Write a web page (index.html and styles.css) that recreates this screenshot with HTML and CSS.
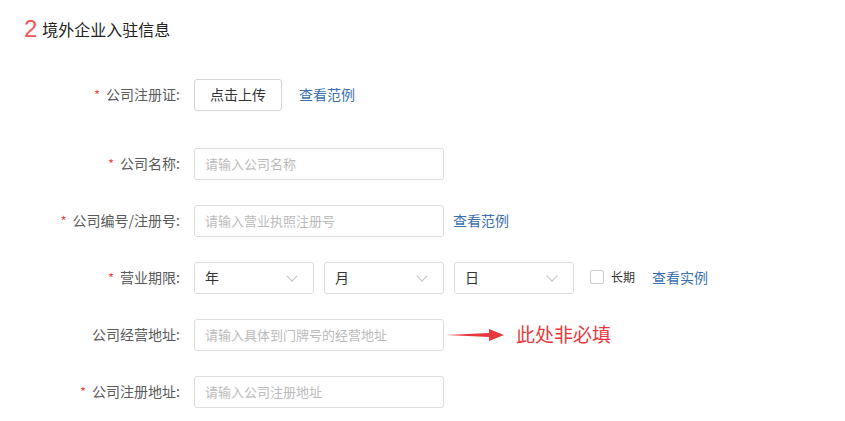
FILE: index.html
```html
<!DOCTYPE html>
<html lang="zh-CN">
<head>
    <meta charset="UTF-8">
    <title>境外企业入驻信息</title>
    <link rel="stylesheet" href="styles.css">
</head>
<body>

<div class="section">
    <h3 class="section-title"><span class="step">2</span>境外企业入驻信息</h3>

    <div class="form">
        <div class="form-row first">
            <label class="label required">公司注册证:</label>
            <button class="upload-btn">点击上传</button>
            <a class="link link-wide">查看范例</a>
        </div>

        <div class="form-row">
            <label class="label required">公司名称:</label>
            <input class="text-input" type="text" placeholder="请输入公司名称">
        </div>

        <div class="form-row">
            <label class="label required">公司编号/注册号:</label>
            <input class="text-input" type="text" placeholder="请输入营业执照注册号">
            <a class="link">查看范例</a>
        </div>

        <div class="form-row">
            <label class="label required">营业期限:</label>
            <div class="select">年<span class="chevron"></span></div>
            <div class="select">月<span class="chevron"></span></div>
            <div class="select">日<span class="chevron"></span></div>
            <span class="checkbox"></span>
            <span class="check-text">长期</span>
            <a class="link link-wide">查看实例</a>
        </div>

        <div class="form-row">
            <label class="label">公司经营地址:</label>
            <input class="text-input" type="text" placeholder="请输入具体到门牌号的经营地址">
            <svg class="arrow" width="58" height="12" viewBox="0 0 58 12">
                <polygon points="0,6 43,4 43,0 58,6 43,12 43,8" fill="#e8383d"/>
            </svg>
            <span class="note">此处非必填</span>
        </div>

        <div class="form-row">
            <label class="label required">公司注册地址:</label>
            <input class="text-input" type="text" placeholder="请输入公司注册地址">
        </div>
    </div>
</div>

</body>
</html>
```

FILE: styles.css
```css
body {
    margin: 0;
    background-color: #ffffff;
    font-family: "Microsoft YaHei", "Noto Sans CJK SC", "Noto Sans", sans-serif;
    color: #333333;
}

.section {
    padding: 17px 0 0 24px;
}
.section-title {
    margin: 0 0 38px 0;
    font-size: 16px;
    font-weight: normal;
    line-height: 24px;
    display: flex;
    align-items: center;
    color: #222222;
}
.section-title .step {
    font-size: 24px;
    color: #f0555a; /* step number red */
    margin-right: 5px;
    font-family: "Liberation Sans", "Noto Sans", sans-serif;
}

/* form rows */
.form {
    margin-left: -24px;
}
.form-row {
    display: flex;
    align-items: center;
    height: 32px;
    margin-bottom: 25px;
}
.form-row.first {
    margin-bottom: 37px;
}
.label {
    width: 180px;
    flex-shrink: 0;
    text-align: right;
    font-size: 14px;
    color: #5a5a5a;
    margin-right: 14px;
    padding-bottom: 3px;
}
.label.required::before {
    content: "*";
    color: #e94b4b;
    font-size: 13px;
    margin-right: 6px;
}

.upload-btn {
    width: 88px;
    height: 32px;
    background-color: #ffffff;
    border: 1px solid #d4d4d4;
    border-radius: 3px;
    font-family: inherit;
    font-size: 14px;
    color: #333333;
    padding: 0 0 2px 0;
}

.text-input {
    width: 250px;
    height: 32px;
    box-sizing: border-box;
    border: 1px solid #dddddd;
    border-radius: 3px;
    padding: 0 10px 2px 10px;
    font-family: inherit;
    font-size: 13px;
    color: #333333;
    outline: none;
}
.text-input::placeholder {
    color: #bbbbbb;
}

.link {
    font-size: 14px;
    color: #3a6fb0;
    margin-left: 9px;
    padding-bottom: 3px;
    cursor: pointer;
}
.link.link-wide {
    margin-left: 17px;
}

.select {
    position: relative;
    width: 120px;
    height: 32px;
    box-sizing: border-box;
    border: 1px solid #dddddd;
    border-radius: 3px;
    padding-left: 10px;
    font-size: 14px;
    line-height: 28px;
    color: #333333;
    margin-right: 10px;
}
.select .chevron {
    position: absolute;
    right: 17px;
    top: 9px;
    width: 7px;
    height: 7px;
    border-right: 1px solid #c4c4c4;
    border-bottom: 1px solid #c4c4c4;
    transform: rotate(45deg);
}

.checkbox {
    width: 12px;
    height: 12px;
    border: 1px solid #cccccc;
    border-radius: 2px;
    margin-left: 6px;
    margin-bottom: 2px;
}
.check-text {
    font-size: 12px;
    color: #333333;
    margin-left: 7px;
    padding-bottom: 3px;
}

.arrow {
    margin-left: 2px;
}
.note {
    font-size: 19px;
    color: #e8383d;
    margin-left: 12px;
    padding-bottom: 3px;
}
```
